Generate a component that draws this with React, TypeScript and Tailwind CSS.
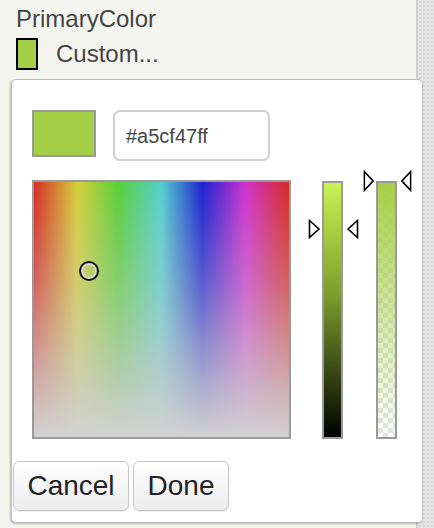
import React from "react";

const FONT = "font-['Liberation_Sans','Helvetica','Arial',sans-serif]";

function Arrow({ dir, className }: { dir: "right" | "left"; className: string }) {
  // outlined triangle pointing toward the slider bar
  const points = dir === "right" ? "1.5,1.5 11,10 1.5,18.5" : "11.5,1.5 2,10 11.5,18.5";
  return (
    <svg viewBox="0 0 13 20" className={className} preserveAspectRatio="none">
      <polygon points={points} fill="white" stroke="black" strokeWidth="1.6" strokeLinejoin="miter" />
    </svg>
  );
}

export default function App() {
  return (
    <div className={`relative flex w-[434px] h-[528px] overflow-hidden ${FONT}`}>
      {/* property panel */}
      <div className="w-[416px] h-full bg-[#f5f5f0] pl-[16px] text-[#444]">
        <div className="pt-[7px] text-[24px] leading-[24px]">PrimaryColor</div>
        <div className="mt-[7px] flex items-center h-[32px]">
          <div className="w-[22px] h-[32px] border-2 border-black bg-[#a5cf47]" />
          <span className="ml-[18px] text-[24px] leading-[24px]">Custom...</span>
        </div>
      </div>
      <div className="flex-1 h-full border-l-2 border-[#cfcfcf] bg-[#e6e6e6] bg-[radial-gradient(#d2d2d2_1px,transparent_1px)] bg-[length:4px_4px]" />

      {/* colour picker popup */}
      <div className="absolute left-[11px] top-[79px] w-[412px] h-[444px] bg-white border border-[#bdbdbd] rounded-[5px] shadow-[-1px_1px_2px_rgba(0,0,0,0.25)] flex flex-col">
        <div className="flex items-start gap-[17px] pl-[20px] pt-[30px]">
          <div className="w-[64px] h-[47px] border-2 border-[#999] bg-[#a5cf47]" />
          <div className="w-[157px] h-[51px] border-2 border-[#d0d0d0] rounded-[7px] flex items-center pl-[11px] text-[20px] text-[#444]">
            #a5cf47ff
          </div>
        </div>

        <div className="flex items-start pl-[20px] mt-[19px]">
          {/* saturation / hue field */}
          <div className="relative w-[259px] h-[259px] border-2 border-[#9a9a9a] bg-[linear-gradient(to_right,#d62a22_0%,#d6cf3a_17%,#5acf3a_33%,#55cfcf_50%,#1a22cf_66%,#cf32cf_83%,#d62a22_100%)]">
            <div className="absolute inset-0 bg-[linear-gradient(to_bottom,rgba(206,206,206,0)_0%,rgba(206,206,206,0.35)_40%,rgba(206,206,206,0.8)_80%,#d2d2d2_100%)]" />
            <div className="absolute left-[45px] top-[79px] w-[20px] h-[20px] rounded-full border-2 border-[#111] shadow-[inset_0_0_0_2px_#d8d8d8]" />
          </div>

          {/* value slider */}
          <div className="relative ml-[31px] mt-[1px] w-[21px] h-[258px] border-2 border-[#9a9a9a] bg-[linear-gradient(to_bottom,#c9f452,#7a9a2e_45%,#000)]">
            <Arrow dir="right" className="absolute left-[-16px] top-[36px] w-[13px] h-[20px]" />
            <Arrow dir="left" className="absolute left-[22px] top-[36px] w-[13px] h-[20px]" />
          </div>

          {/* alpha slider */}
          <div className="relative ml-[33px] mt-[1px] w-[21px] h-[258px] border-2 border-[#9a9a9a] bg-[conic-gradient(#e4e4e4_25%,#fff_0_50%,#e4e4e4_0_75%,#fff_0)] bg-[length:10px_10px]">
            <div className="absolute inset-0 bg-[linear-gradient(to_bottom,#a5cf47,rgba(165,207,71,0))]" />
            <Arrow dir="right" className="absolute left-[-15px] top-[-13px] w-[12px] h-[22px]" />
            <Arrow dir="left" className="absolute left-[22px] top-[-13px] w-[12px] h-[22px]" />
          </div>
        </div>

        <div className="flex gap-[4px] pl-[1px] mt-[22px]">
          <button className="w-[116px] h-[50px] rounded-[6px] border border-[#c6c6c6] bg-[linear-gradient(to_bottom,#ffffff,#ececec)] text-[28px] text-[#222] shadow-[0_1px_1px_rgba(0,0,0,0.08)]">
            Cancel
          </button>
          <button className="w-[96px] h-[50px] rounded-[6px] border border-[#c6c6c6] bg-[linear-gradient(to_bottom,#ffffff,#ececec)] text-[28px] text-[#222] shadow-[0_1px_1px_rgba(0,0,0,0.08)]">
            Done
          </button>
        </div>
      </div>
    </div>
  );
}
